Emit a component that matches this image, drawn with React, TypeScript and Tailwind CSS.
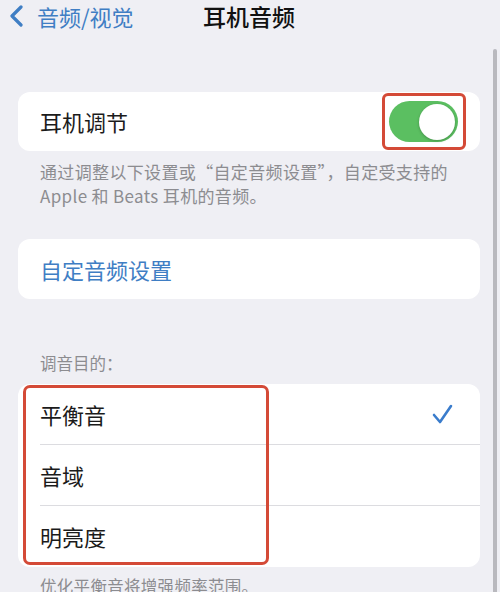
import React from 'react';

const font = { fontFamily: '"Noto Sans CJK SC", "Noto Sans", sans-serif' };

const Toggle: React.FC = () => (
  <div className="relative">
    <div className="w-[69px] h-[41px] rounded-full bg-[#5bbf61] flex items-center justify-end pr-[3px]">
      <div className="w-[36px] h-[36px] rounded-full bg-white shadow-[0_1px_3px_rgba(0,0,0,0.25)]" />
    </div>
    {/* red highlight */}
    <div className="absolute -left-[7px] -top-[8px] w-[84px] h-[57px] border-[3px] border-[#d44a37] rounded-[6px]" />
  </div>
);

const Check: React.FC = () => (
  <svg width="21" height="20" viewBox="0 0 21 20" fill="none">
    <path d="M2 11 L8 18 L19 2" stroke="#3a7ccc" strokeWidth="2.6" strokeLinecap="round" strokeLinejoin="round" />
  </svg>
);

const App: React.FC = () => {
  const options = ['平衡音', '音域', '明亮度'];

  return (
    <div className="relative w-[500px] h-[592px] overflow-hidden bg-[#efeff4]" style={font}>
      {/* scroll indicator */}
      <div className="absolute right-[3px] top-[49px] w-[4px] h-[560px] rounded-full bg-[#b9b9be]" />

      {/* nav bar */}
      <div className="relative h-[32px] flex items-center">
        <div className="flex items-center pl-[8px] gap-[12px] text-[#3f7ec4]">
          <svg width="17" height="22" viewBox="0 0 17 22" fill="none">
            <path d="M13 2 L4 11 L13 20" stroke="#3f7ec4" strokeWidth="3.2" strokeLinecap="round" strokeLinejoin="round" />
          </svg>
          <span className="text-[22px] leading-none">音频/视觉</span>
        </div>
        <div className="absolute left-[203px] top-0 h-[32px] flex items-center text-[23px] font-medium text-[#111] leading-none">
          耳机音频
        </div>
      </div>

      <div className="px-[18px] pr-[20px]">
        {/* headphone accommodations */}
        <div className="mt-[60px] h-[59px] rounded-[12px] bg-white flex items-center justify-between pl-[22px] pr-[22px]">
          <span className="text-[22px] text-[#1b1b1b]">耳机调节</span>
          <Toggle />
        </div>
        <p className="mt-[9px] px-[22px] text-[17px] leading-[24px] text-[#8c8c90] tracking-[0.35px]">
          通过调整以下设置或“自定音频设置”，自定受支持的
          <br />
          Apple 和 Beats 耳机的音频。
        </p>

        {/* custom audio setup */}
        <div className="mt-[31px] h-[60px] rounded-[12px] bg-white flex items-center pl-[22px]">
          <span className="text-[22px] text-[#3f7ec4]">自定音频设置</span>
        </div>

        <div className="mt-[52px] px-[22px] text-[16.5px] leading-[24px] text-[#8c8c90]">调音目的：</div>

        {/* tune for */}
        <div className="relative mt-[9px] rounded-[12px] bg-white">
          {options.map((o, i) => (
            <div key={o} className="pl-[22px]">
              <div
                className={
                  'h-[61px] flex items-center justify-between pr-[27px] ' +
                  (i < options.length - 1 ? 'border-b border-[#dcdce0]' : '')
                }
              >
                <span className="text-[22px] text-[#1b1b1b]">{o}</span>
                {i === 0 && <Check />}
              </div>
            </div>
          ))}
          {/* red highlight */}
          <div className="absolute left-[5px] top-[1px] w-[246px] h-[180px] border-[3px] border-[#d44a37] rounded-[7px]" />
        </div>

        <p className="mt-[7px] px-[22px] text-[16.5px] leading-[24px] text-[#8c8c90] tracking-[0.3px]">优化平衡音将增强频率范围。</p>
      </div>
    </div>
  );
};

export default App;
